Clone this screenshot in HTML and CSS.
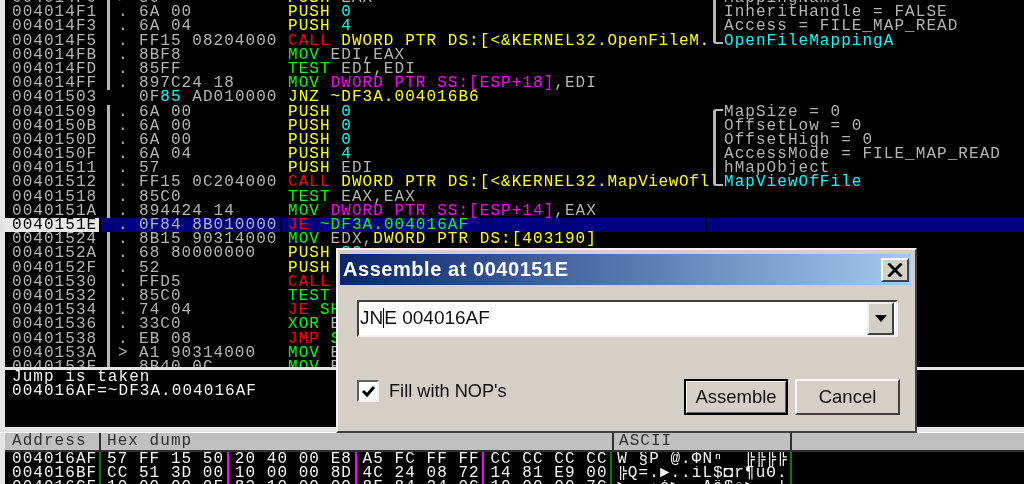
FILE: index.html
```html
<!DOCTYPE html>
<html lang="en">
<head>
<meta charset="utf-8">
<title>Assemble at 0040151E</title>
<link rel="stylesheet" href="styles.css">
</head>
<body>
<div class="app">
  <section class="disasm">
    <div class="row"><span class="addr">004014F0</span><span class="mark">&gt;</span><span class="hex">50</span><span class="asm"><b class="y">PUSH</b> EAX</span><span class="cm"><i class="bk"></i>MappingName</span></div>
    <div class="row"><span class="addr">004014F1</span><span class="mark">.</span><span class="hex">6A 00</span><span class="asm"><b class="y">PUSH</b> <b class="c">0</b></span><span class="cm"><i class="bk"></i>InheritHandle = FALSE</span></div>
    <div class="row"><span class="addr">004014F3</span><span class="mark">.</span><span class="hex">6A 04</span><span class="asm"><b class="y">PUSH</b> <b class="c">4</b></span><span class="cm"><i class="bk"></i>Access = FILE_MAP_READ</span></div>
    <div class="row"><span class="addr">004014F5</span><span class="mark">.</span><span class="hex">FF15 08204000</span><span class="asm"><b class="r">CALL</b> <b class="y">DWORD PTR DS:[&lt;&amp;KERNEL32.<span class="tail">OpenFileM.</span></b></span><span class="cm"><i class="bk end"></i><b class="c">OpenFileMappingA</b></span></div>
    <div class="row"><span class="addr">004014FB</span><span class="mark">.</span><span class="hex">8BF8</span><span class="asm"><b class="g">MOV</b> EDI,EAX</span><span class="cm"></span></div>
    <div class="row"><span class="addr">004014FD</span><span class="mark">.</span><span class="hex">85FF</span><span class="asm"><b class="g">TEST</b> EDI,EDI</span><span class="cm"></span></div>
    <div class="row"><span class="addr">004014FF</span><span class="mark">.</span><span class="hex">897C24 18</span><span class="asm"><b class="g">MOV</b> <b class="m">DWORD PTR SS:[ESP+18]</b>,EDI</span><span class="cm"></span></div>
    <div class="row"><span class="addr">00401503</span><span class="mark noline"></span><span class="hex">0F<b class="c">85</b> AD010000</span><span class="asm"><b class="y">JNZ ~DF3A.004016B6</b></span><span class="cm"></span></div>
    <div class="row"><span class="addr">00401509</span><span class="mark">.</span><span class="hex">6A 00</span><span class="asm"><b class="y">PUSH</b> <b class="c">0</b></span><span class="cm"><i class="bk start"></i>MapSize = 0</span></div>
    <div class="row"><span class="addr">0040150B</span><span class="mark">.</span><span class="hex">6A 00</span><span class="asm"><b class="y">PUSH</b> <b class="c">0</b></span><span class="cm"><i class="bk"></i>OffsetLow = 0</span></div>
    <div class="row"><span class="addr">0040150D</span><span class="mark">.</span><span class="hex">6A 00</span><span class="asm"><b class="y">PUSH</b> <b class="c">0</b></span><span class="cm"><i class="bk"></i>OffsetHigh = 0</span></div>
    <div class="row"><span class="addr">0040150F</span><span class="mark">.</span><span class="hex">6A 04</span><span class="asm"><b class="y">PUSH</b> <b class="c">4</b></span><span class="cm"><i class="bk"></i>AccessMode = FILE_MAP_READ</span></div>
    <div class="row"><span class="addr">00401511</span><span class="mark">.</span><span class="hex">57</span><span class="asm"><b class="y">PUSH</b> EDI</span><span class="cm"><i class="bk"></i>hMapObject</span></div>
    <div class="row"><span class="addr">00401512</span><span class="mark">.</span><span class="hex">FF15 0C204000</span><span class="asm"><b class="r">CALL</b> <b class="y">DWORD PTR DS:[&lt;&amp;KERNEL32.<span class="tail">MapViewOfl</span></b></span><span class="cm"><i class="bk end"></i><b class="c">MapViewOfFile</b></span></div>
    <div class="row"><span class="addr">00401518</span><span class="mark">.</span><span class="hex">85C0</span><span class="asm"><b class="g">TEST</b> EAX,EAX</span><span class="cm"></span></div>
    <div class="row"><span class="addr">0040151A</span><span class="mark">.</span><span class="hex">894424 14</span><span class="asm"><b class="g">MOV</b> <b class="m">DWORD PTR SS:[ESP+14]</b>,EAX</span><span class="cm"></span></div>
    <div class="row sel"><span class="addr">0040151E</span><span class="mark noline">.</span><span class="hex">0F84 8B010000</span><span class="asm"><b class="r">JE</b> <b class="g">~DF3A.004016AF</b></span><span class="cm"></span></div>
    <div class="row"><span class="addr">00401524</span><span class="mark">.</span><span class="hex">8B15 90314000</span><span class="asm"><b class="g">MOV</b> EDX,<b class="y">DWORD PTR DS:[403190]</b></span><span class="cm"></span></div>
    <div class="row"><span class="addr">0040152A</span><span class="mark">.</span><span class="hex">68 80000000</span><span class="asm"><b class="y">PUSH</b> <b class="c">80</b></span><span class="cm"></span></div>
    <div class="row"><span class="addr">0040152F</span><span class="mark">.</span><span class="hex">52</span><span class="asm"><b class="y">PUSH</b> EDX</span><span class="cm"></span></div>
    <div class="row"><span class="addr">00401530</span><span class="mark">.</span><span class="hex">FFD5</span><span class="asm"><b class="r">CALL</b> EBP</span><span class="cm"></span></div>
    <div class="row"><span class="addr">00401532</span><span class="mark">.</span><span class="hex">85C0</span><span class="asm"><b class="g">TEST</b> EAX,EAX</span><span class="cm"></span></div>
    <div class="row"><span class="addr">00401534</span><span class="mark">.</span><span class="hex">74 04</span><span class="asm"><b class="r">JE</b> <b class="g">SHORT</b></span><span class="cm"></span></div>
    <div class="row"><span class="addr">00401536</span><span class="mark">.</span><span class="hex">33C0</span><span class="asm"><b class="g">XOR</b> EAX,EAX</span><span class="cm"></span></div>
    <div class="row"><span class="addr">00401538</span><span class="mark">.</span><span class="hex">EB 08</span><span class="asm"><b class="r">JMP</b> <b class="g">SHORT</b></span><span class="cm"></span></div>
    <div class="row"><span class="addr">0040153A</span><span class="mark">&gt;</span><span class="hex">A1 90314000</span><span class="asm"><b class="g">MOV</b> EAX,<b class="y">DS:[403190]</b></span><span class="cm"></span></div>
    <div class="row"><span class="addr">0040153F</span><span class="mark">.</span><span class="hex">8B40 0C</span><span class="asm"><b class="g">MOV</b> EAX,<b class="y">[EAX+C]</b></span><span class="cm"></span></div>
  </section>

  <section class="info">
    <div class="info-line">Jump is taken</div>
    <div class="info-line">004016AF=~DF3A.004016AF</div>
  </section>

  <section class="dump">
    <header class="dump-head">
      <span class="h-addr">Address</span>
      <span class="h-hex">Hex dump</span>
      <span class="h-ascii">ASCII</span>
      <span class="h-rest"></span>
    </header>
    <div class="drow"><span class="d-addr">004016AF</span><span class="grp">57 FF 15 50</span><span class="grp">20 40 00 E8</span><span class="grp">A5 FC FF FF</span><span class="grp last">CC CC CC CC</span><span class="ascii">W §P @.ΦÑⁿ  ╠╠╠╠</span></div>
    <div class="drow"><span class="d-addr">004016BF</span><span class="grp">CC 51 3D 00</span><span class="grp">10 00 00 8D</span><span class="grp">4C 24 08 72</span><span class="grp last">14 81 E9 00</span><span class="ascii">╠Q=.►..ìL$◘r¶üΘ.</span></div>
    <div class="drow"><span class="d-addr">004016CF</span><span class="grp">10 00 00 0F</span><span class="grp">82 10 00 00</span><span class="grp">8F 84 24 0C</span><span class="grp last">10 00 00 7C</span><span class="ascii">►..☼é►..Åä$♀►..|</span></div>
  </section>

  <div class="dialog">
    <div class="titlebar">
      <span class="title">Assemble at 0040151E</span>
      <span class="close">
        <svg width="16" height="14" viewBox="0 0 16 14"><path d="M1.5 0.5 L14.5 13.5 M14.5 0.5 L1.5 13.5" stroke="#000" stroke-width="2.8" fill="none"/></svg>
      </span>
    </div>
    <div class="combo">
      <span class="combo-text">JN<span class="caret"></span>E 004016AF</span>
      <span class="drop"><svg width="14" height="8" viewBox="0 0 14 8"><path d="M1 0 H13 L7 7 Z" fill="#000"/></svg></span>
    </div>
    <div class="actions">
      <label class="check">
        <span class="box"><svg width="15" height="14" viewBox="0 0 15 14"><path d="M2 7 L6 11 L13 3" stroke="#000" stroke-width="3" fill="none"/></svg></span>
        <span>Fill with NOP's</span>
      </label>
      <div class="buttons">
        <span class="btn default">Assemble</span>
        <span class="btn">Cancel</span>
      </div>
    </div>
  </div>
</div>
</body>
</html>
```
FILE: styles.css
```css
* { box-sizing: border-box; }
html, body { margin: 0; padding: 0; background: #000; }
body { width: 1024px; height: 484px; overflow: hidden; }

.app {
  position: relative;
  width: 1024px;
  height: 484px;
  overflow: hidden;
  padding-left: 5px;
  background: #e4e4e4;
  font-family: "Liberation Mono", "DejaVu Sans Mono", monospace;
  font-size: 16px;
  letter-spacing: 1.05px;
  line-height: 14.2px;
  color: #b4b4b4;
  filter: blur(0.55px);
}
b, i { font-weight: normal; font-style: normal; }

.disasm { height: 367px; background: #000; overflow: hidden; }
.row { display: flex; height: 14.2px; white-space: pre; }
.row:first-child { margin-top: -9px; }
.addr { width: 96px; padding-left: 7px; flex: none; }
.mark {
  width: 38px;
  flex: none;
  padding-left: 17px;
  background: linear-gradient(#b8b8b8, #b8b8b8) 6px 0 / 3px 100% no-repeat;
}
.mark.noline { background: none; }
.hex { width: 141px; flex: none; margin-right: 2px; }
.asm { width: 423px; flex: none; padding-left: 6px; margin-right: 2px; }
.tail { letter-spacing: 0.6px; }
.cm { display: flex; flex: 1; }
.bk {
  flex: none;
  width: 10px;
  margin: 0 1px 0 6px;
  border-left: 3px solid #b8b8b8;
}
.bk.start { border-top: 2px solid #b8b8b8; margin-top: 4px; border-top-left-radius: 3px; }
.bk.end { border-bottom: 2px solid #b8b8b8; margin-bottom: 4px; border-bottom-left-radius: 3px; }

.y { color: #ffff00; }
.c { color: #00ffff; }
.r { color: #ff0000; }
.g { color: #00ff00; }
.m { color: #ff00ff; }

.sel .addr { width: 94px; margin-right: 2px; background: #e8e8e8; color: #000; }
.sel .mark, .sel .hex, .sel .asm, .sel .cm { background: #000080; }

.info {
  height: 57px;
  margin-top: 3px;
  padding-left: 7px;
  background: #000;
  color: #f4f4f4;
}
.info-line { white-space: pre; }

.dump { margin-top: 5px; margin-left: -5px; padding-left: 5px; border-top: 1px solid #fff; background: #e4e4e4; }
.dump-head { display: flex; height: 19px; background: #c0c0c0; border-bottom: 2px solid #303030; color: #303030; line-height: 17px; }
.h-addr { width: 96px; flex: none; padding-left: 7px; border-right: 2px solid #303030; }
.h-hex { width: 511px; flex: none; padding-left: 6px; }
.h-ascii { width: 180px; flex: none; padding-left: 5px; border-left: 2px solid #303030; border-right: 2px solid #303030; }
.h-rest { flex: 1; }

.drow { display: flex; height: 14px; line-height: 14px; background: #000; color: #f4f4f4; white-space: pre; }
.d-addr { width: 96px; flex: none; padding-left: 7px; border-right: 2px solid #008000; }
.grp { width: 127.8px; flex: none; padding-left: 6px; border-right: 2px solid #ff00ff; }
.grp.last { border-right-color: #008000; }
.ascii { width: 180px; flex: none; padding-left: 5px; border-right: 2px solid #008000; overflow: hidden; }

.dialog {
  position: absolute;
  left: 336px;
  top: 248px;
  width: 581px;
  height: 185px;
  padding: 6px 4px 0 4px;
  background: #d4d0c8;
  border: 2px solid;
  border-color: #f4f2ee #404040 #404040 #f4f2ee;
  font-family: "Liberation Sans", Arial, sans-serif;
  letter-spacing: 0;
  color: #101010;
}
.titlebar {
  display: flex;
  align-items: center;
  justify-content: space-between;
  height: 31px;
  padding: 0 2px 0 3px;
  margin: -2px 0 0 -2px;
  background: linear-gradient(to right, #0a246a, #a6caf0);
}
.title { color: #fff; font-weight: bold; font-size: 20px; letter-spacing: 0.55px; line-height: 31px; }
.close {
  display: flex;
  align-items: center;
  justify-content: center;
  width: 28px;
  height: 24px;
  background: #d4d0c8;
  border: 2px solid;
  border-color: #fff #404040 #404040 #fff;
}
.combo {
  display: flex;
  justify-content: space-between;
  height: 37px;
  margin: 15px 13px 0 15px;
  padding: 2px 5px 2px 0;
  border: 2px solid;
  border-color: #404040 #f4f2ee #f4f2ee #404040;
  background: #fff;
}
.combo-text { font-size: 19px; line-height: 27px; padding-left: 1px; white-space: pre; }
.caret { display: inline-block; width: 0; height: 20px; border-left: 1px solid #000; vertical-align: -4px; }
.drop {
  display: flex;
  align-items: center;
  justify-content: center;
  width: 27px;
  margin: -2px -3px -2px 0;
  background: #d4d0c8;
  border: 2px solid;
  border-color: #f4f2ee #404040 #404040 #f4f2ee;
}
.actions {
  display: flex;
  justify-content: space-between;
  align-items: flex-start;
  margin: 42px 11px 0 15px;
}
.check { display: flex; align-items: center; gap: 10px; font-size: 18.2px; line-height: 22px; margin-top: 1px; }
.box {
  display: flex;
  align-items: center;
  justify-content: center;
  width: 22px;
  height: 22px;
  background: #fff;
  border: 2px solid;
  border-color: #606060 #f4f2ee #f4f2ee #606060;
}
.buttons { display: flex; gap: 7px; }
.btn {
  display: flex;
  align-items: center;
  justify-content: center;
  width: 105px;
  height: 36px;
  font-size: 18.5px;
  background: #d4d0c8;
  border: 2px solid;
  border-color: #f8f8f8 #404040 #404040 #f8f8f8;
}
.btn.default { width: 104px; border-color: #000; box-shadow: inset 1px 1px 0 #f8f8f8, inset -1px -1px 0 #606060; }
```
